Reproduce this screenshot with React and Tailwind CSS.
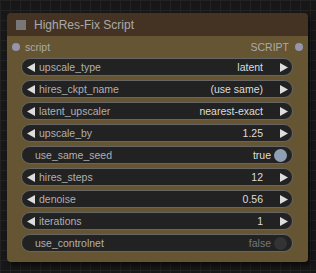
import React from "react"

const widgets = [
  { label: "upscale_type", value: "latent" },
  { label: "hires_ckpt_name", value: "(use same)" },
  { label: "latent_upscaler", value: "nearest-exact" },
  { label: "upscale_by", value: "1.25" },
  { label: "use_same_seed", toggle: true, on: true },
  { label: "hires_steps", value: "12" },
  { label: "denoise", value: "0.56" },
  { label: "iterations", value: "1" },
  { label: "use_controlnet", toggle: true, on: false },
]

function Arrow({ dir }) {
  return (
    <svg width="9" height="9" viewBox="0 0 9 9" className="shrink-0">
      {dir === "left" ? <polygon points="8,0 8,9 0,4.5" fill="#ddd" /> : <polygon points="1,0 1,9 9,4.5" fill="#ddd" />}
    </svg>
  )
}

function Widget({ label, value, toggle, on }) {
  if (toggle) {
    return (
      <div className="h-[18px] rounded-full border border-[#666] bg-[#222] flex items-center pl-[13px] pr-[5px]">
        <span className="text-[#b0b0b0]">{label}</span>
        <span className={`ml-auto mr-[3px] ${on ? "text-[#ddd]" : "text-[#777]"}`}>{on ? "true" : "false"}</span>
        <span className={`w-[13px] h-[13px] rounded-full ${on ? "bg-[#8fa0b5]" : "bg-[#333]"}`} />
      </div>
    )
  }
  return (
    <div className="h-[18px] rounded-full border border-[#666] bg-[#222] flex items-center pl-[5px] pr-[4px]">
      <Arrow dir="left" />
      <span className="ml-[3px] text-[#b0b0b0]">{label}</span>
      <span className="ml-auto mr-[16px] text-[#ddd]">{value}</span>
      <Arrow dir="right" />
    </div>
  )
}

export default function App() {
  return (
    <div
      className="w-[316px] h-[273px] overflow-hidden bg-[#171717] bg-[linear-gradient(#222_1px,transparent_1px),linear-gradient(90deg,#222_1px,transparent_1px)] bg-[size:10px_10px] pt-[13px] pl-[7px]"
      style={{ fontFamily: '"Liberation Sans", Arial, sans-serif' }}
    >
      <div className="w-[301px] rounded-[4px] overflow-hidden shadow-[3px_4px_4px_rgba(0,0,0,0.5)]">
        <div className="h-[23px] bg-[#443322] flex items-center pl-[9px]">
          <span className="w-[10px] h-[10px] bg-[#777]" />
          <span className="ml-[8px] text-[12px] text-[#aaa]">HighRes-Fix Script</span>
        </div>
        <div className="bg-[#665533] pb-[10px] text-[10.5px] leading-none">
          <div className="h-[22px] flex items-center pl-[5px] pr-[5px]">
            <span className="w-[8px] h-[8px] rounded-full bg-[#9596ad]" />
            <span className="ml-[5px] text-[#aaa]">script</span>
            <span className="ml-auto mr-[6px] text-[#aaa]">SCRIPT</span>
            <span className="w-[8px] h-[8px] rounded-full bg-[#9596ad]" />
          </div>
          <div className="flex flex-col gap-[4px] pl-[14px] pr-[15px]">
            {widgets.map((w) => (
              <Widget key={w.label} {...w} />
            ))}
          </div>
        </div>
      </div>
    </div>
  )
}
